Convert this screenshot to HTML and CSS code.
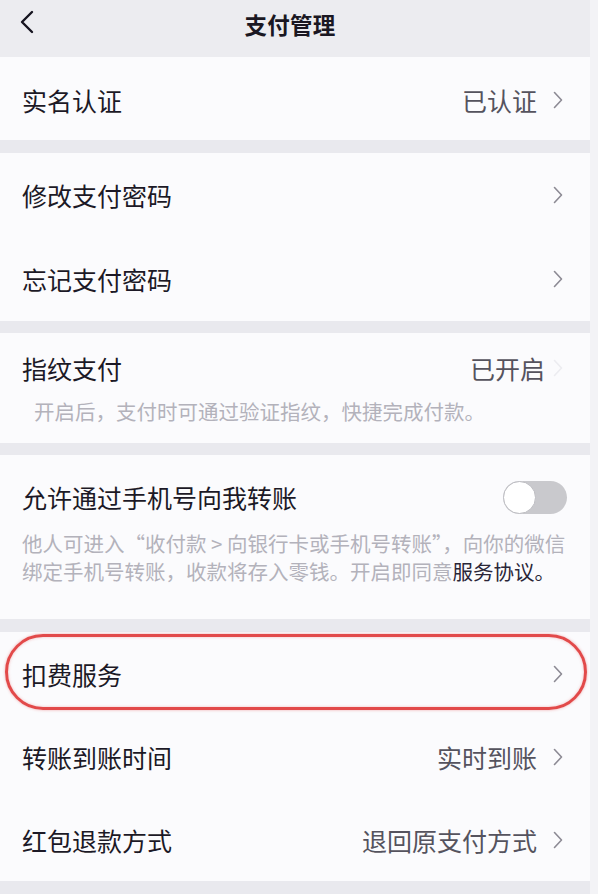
FILE: index.html
```html
<!DOCTYPE html>
<html lang="zh-CN">
<head>
<meta charset="utf-8">
<title>支付管理</title>
<link rel="stylesheet" href="styles.css">
</head>
<body>
<div class="page">
  <header class="nav">
    <svg class="back" width="16" height="24" viewBox="0 0 16 24"><path d="M13 2 L3 12 L13 22" fill="none" stroke="#161420" stroke-width="2.4" stroke-linecap="round" stroke-linejoin="round"/></svg>
    <h1 class="title">支付管理</h1>
  </header>

  <section class="group g1">
    <div class="row">
      <span class="label">实名认证</span>
      <span class="value">已认证</span>
      <svg class="chev" width="10" height="18" viewBox="0 0 10 18"><path d="M1.5 1.5 L8.5 9 L1.5 16.5" fill="none" stroke="#8c8a94" stroke-width="1.6" stroke-linecap="round" stroke-linejoin="round"/></svg>
    </div>
  </section>

  <section class="group g2">
    <div class="row">
      <span class="label">修改支付密码</span>
      <span class="value"></span>
      <svg class="chev" width="10" height="18" viewBox="0 0 10 18"><path d="M1.5 1.5 L8.5 9 L1.5 16.5" fill="none" stroke="#8c8a94" stroke-width="1.6" stroke-linecap="round" stroke-linejoin="round"/></svg>
    </div>
    <div class="row">
      <span class="label">忘记支付密码</span>
      <span class="value"></span>
      <svg class="chev" width="10" height="18" viewBox="0 0 10 18"><path d="M1.5 1.5 L8.5 9 L1.5 16.5" fill="none" stroke="#8c8a94" stroke-width="1.6" stroke-linecap="round" stroke-linejoin="round"/></svg>
    </div>
  </section>

  <section class="group g3 block">
    <div class="line">
      <span class="label">指纹支付</span>
      <span class="value near">已开启</span>
      <svg class="chev" width="10" height="18" viewBox="0 0 10 18"><path d="M1.5 1.5 L8.5 9 L1.5 16.5" fill="none" stroke="#ececf0" stroke-width="1.6" stroke-linecap="round" stroke-linejoin="round"/></svg>
    </div>
    <p class="desc indent">开启后，支付时可通过验证指纹，快捷完成付款。</p>
  </section>

  <section class="group g4 block">
    <div class="line">
      <span class="label">允许通过手机号向我转账</span>
      <span class="toggle"><span class="knob"></span></span>
    </div>
    <p class="desc desc2">他人可进入“收付款 &gt; 向银行卡或手机号转账”，向你的微信<br>绑定手机号转账，收款将存入零钱。开启即同意<span class="link">服务协议。</span></p>
  </section>

  <section class="group g5">
    <div class="row">
      <span class="label">扣费服务</span>
      <span class="value"></span>
      <svg class="chev" width="10" height="18" viewBox="0 0 10 18"><path d="M1.5 1.5 L8.5 9 L1.5 16.5" fill="none" stroke="#8c8a94" stroke-width="1.6" stroke-linecap="round" stroke-linejoin="round"/></svg>
    </div>
    <div class="row">
      <span class="label">转账到账时间</span>
      <span class="value">实时到账</span>
      <svg class="chev" width="10" height="18" viewBox="0 0 10 18"><path d="M1.5 1.5 L8.5 9 L1.5 16.5" fill="none" stroke="#8c8a94" stroke-width="1.6" stroke-linecap="round" stroke-linejoin="round"/></svg>
    </div>
    <div class="row">
      <span class="label">红包退款方式</span>
      <span class="value">退回原支付方式</span>
      <svg class="chev" width="10" height="18" viewBox="0 0 10 18"><path d="M1.5 1.5 L8.5 9 L1.5 16.5" fill="none" stroke="#8c8a94" stroke-width="1.6" stroke-linecap="round" stroke-linejoin="round"/></svg>
    </div>
    <div class="highlight"></div>
  </section>
</div>
</body>
</html>
```

FILE: styles.css
```css
html, body {
  margin: 0;
  padding: 0;
}
body {
  background: #f3f3f6;
  font-family: "Noto Sans CJK SC", "Noto Sans", sans-serif;
  color: #1c1926;
  width: 598px;
  height: 894px;
  overflow: hidden;
}
.page {
  width: 590px;
  height: 894px;
  background: #e9e9ee;
  position: relative;
}
.nav {
  height: 57px;
  background: #ececf0;
  display: flex;
  align-items: center;
  justify-content: center;
  position: relative;
  padding: 0 10px 10px 0;
  box-sizing: border-box;
}
.back {
  position: absolute;
  left: 19px;
  top: 10px;
}
.title {
  margin: 0;
  font-size: 22.5px;
  font-weight: 700;
  color: #1a1722;
  letter-spacing: 0.3px;
}
.group {
  background: #fbfbfd;
  position: relative;
}
.g1 { margin-top: 0; }
.g2 { margin-top: 13px; }
.g3 { margin-top: 12px; }
.g4 { margin-top: 12px; }
.g5 { margin-top: 13px; }
.row {
  height: 83px;
  display: flex;
  align-items: center;
  padding: 0 27px 0 22px;
  box-sizing: border-box;
}
.g1 .row { height: 83px; padding-top: 2px; }
.g2 .row { height: 84px; }
.line {
  display: flex;
  align-items: center;
  height: 34px;
  padding: 0 27px 0 22px;
}
.label {
  font-size: 25px;
  line-height: 34px;
  color: #1c1926;
  flex: 1;
  white-space: nowrap;
}
.value {
  font-size: 25px;
  line-height: 34px;
  color: #55535e;
  margin-right: 16px;
}
.value.near {
  margin-right: 8px;
}
.chev {
  display: block;
  flex: none;
}
.block.g3 {
  padding: 18px 0 18px;
}
.block.g4 {
  padding: 25px 0 34px;
}
.desc {
  margin: 12px 0 0;
  padding: 0 22px;
  font-size: 20.5px;
  line-height: 28px;
  color: #b3b2bb;
  white-space: nowrap;
}
.desc.indent {
  padding-left: 34px;
}
.desc2 {
  margin-top: 15px;
}
.link {
  color: #2a2638;
}
.toggle {
  width: 64px;
  height: 33px;
  border-radius: 17px;
  background: #c9c9cd;
  position: relative;
  flex: none;
  margin-right: -4px;
}
.knob {
  position: absolute;
  left: 0;
  top: 0;
  width: 33px;
  height: 33px;
  box-sizing: border-box;
  border-radius: 50%;
  background: #ffffff;
  border: 1.5px solid #bdbdc2;
}
.highlight {
  position: absolute;
  left: 5px;
  top: 2px;
  width: 582px;
  height: 76px;
  box-sizing: border-box;
  border: 3px solid #e24a4a;
  border-radius: 38px;
  box-shadow: 0 0 3px rgba(226, 74, 74, 0.45), inset 0 0 3px rgba(226, 74, 74, 0.35);
}
```
